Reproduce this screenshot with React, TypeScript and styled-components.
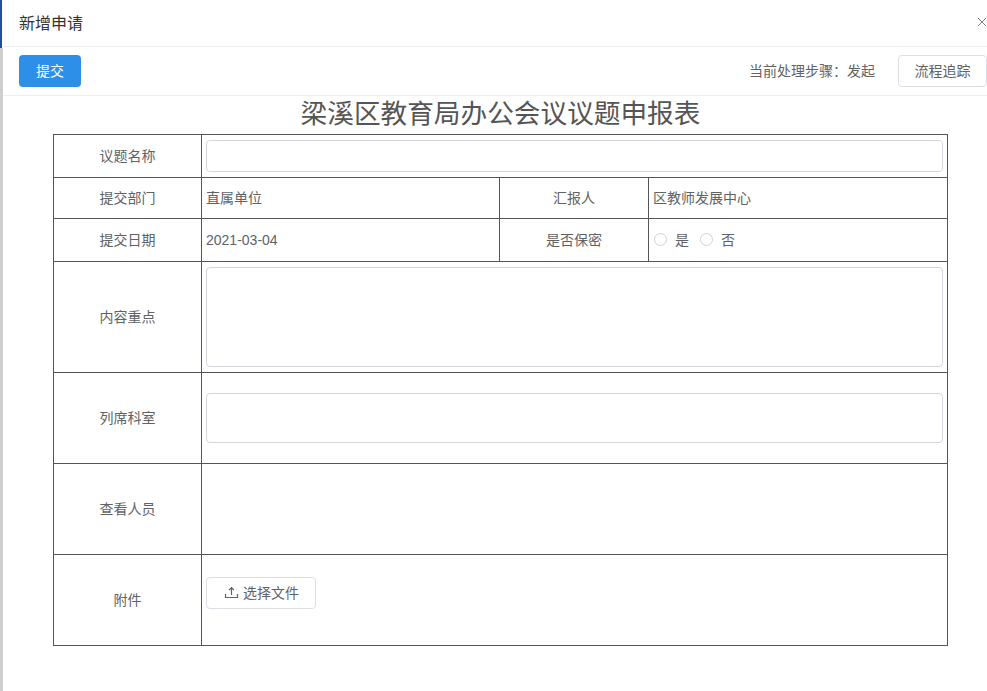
import React from "react";
import styled, { createGlobalStyle } from "styled-components";

const Global = createGlobalStyle`
  html, body { margin: 0; padding: 0; background: #fff; }
  body { font-family: "Liberation Sans", "Noto Sans CJK SC", sans-serif; font-size: 14px; color: #606266; }
  * { box-sizing: border-box; }
`;

const Page = styled.div`
  width: 987px;
  height: 691px;
  display: flex;
  overflow: hidden;
`;
const Strip = styled.div`
  width: 3px;
  flex: none;
  background:
    linear-gradient(#1f4e9c, #1f4e9c) 0 0 / 2px 48px no-repeat,
    linear-gradient(#fff 0 48px, #cfcfcf 48px);
`;
const Dialog = styled.div`
  flex: 1;
  min-width: 0;
  display: flex;
  flex-direction: column;
`;
const Header = styled.header`
  height: 47px;
  flex: none;
  display: flex;
  align-items: center;
  justify-content: space-between;
  padding: 0 0 3px 16px;
  border-bottom: 1px solid #ebeef5;
`;
const Title = styled.span`
  font-size: 16px;
  color: #333;
`;
const Close = styled.span`
  width: 14px;
  margin-right: -2px;
  display: flex;
  color: #808388;
`;
const Toolbar = styled.div`
  height: 49px;
  flex: none;
  display: flex;
  align-items: center;
  justify-content: space-between;
  padding: 0 0 1px 16px;
  border-bottom: 1px solid #ebeef5;
`;
const Primary = styled.button`
  width: 62px;
  height: 32px;
  border: 0;
  border-radius: 4px;
  background: #2d8fe8;
  color: #fff;
  font: inherit;
  font-size: 14px;
  padding: 0 0 2px;
`;
const Right = styled.div`
  display: flex;
  align-items: center;
  gap: 23px;
`;
const Step = styled.span`
  font-size: 14px;
  color: #606266;
  padding-bottom: 2px;
`;
const Plain = styled.button`
  width: 89px;
  height: 32px;
  border: 1px solid #dcdfe6;
  border-radius: 4px;
  background: #fff;
  color: #606266;
  font: inherit;
  font-size: 14px;
  padding: 0 0 2px;
`;
const Body = styled.main`
  padding: 0 39px 0 50px;
`;
const Heading = styled.h1`
  margin: 0;
  height: 38px;
  line-height: 37px;
  text-align: center;
  font-family: "Liberation Serif", "Noto Sans CJK SC", serif;
  font-size: 26.67px;
  font-weight: 400;
  color: #555;
`;
const Table = styled.table`
  width: 895px;
  table-layout: fixed;
  border-collapse: collapse;
  border: 1px solid #555;
  td { border: 1px solid #555; padding: 0; }
`;
const Row = styled.tr<{ $h: number }>`
  height: ${(p) => p.$h}px;
`;
const Label = styled.td`
  text-align: center;
  color: #606266;
  padding-bottom: 2px !important;
`;
const Value = styled.td`
  padding: 0 4px 2px !important;
  color: #606266;
`;
const DateValue = styled.td`
  padding: 0 4px !important;
  color: #606266;
`;
const FieldCell = styled.td`
  padding: 0 4px !important;
`;
const Field = styled.div<{ $h: number }>`
  height: ${(p) => p.$h}px;
  border: 1px solid #d3d6dc;
  border-radius: 4px;
  background: #fff;
`;
const Radios = styled.div`
  display: flex;
  align-items: center;
  padding-left: 1px;
`;
const RadioDot = styled.span`
  width: 13px;
  height: 13px;
  border: 1px solid #cfd2d8;
  border-radius: 50%;
  background: #fff;
`;
const RadioText = styled.span`
  margin: 0 11px 0 8px;
`;
const UploadCell = styled.td`
  vertical-align: top;
  padding: 22px 4px 0 !important;
`;
const Upload = styled.button`
  width: 110px;
  height: 32px;
  display: flex;
  align-items: center;
  justify-content: center;
  gap: 4px;
  border: 1px solid #dcdfe6;
  border-radius: 4px;
  background: #fff;
  color: #606266;
  font: inherit;
  font-size: 14px;
  padding: 0 0 2px 1px;
`;

export default function App() {
  return (
    <Page>
      <Global />
      <Strip />
      <Dialog>
        <Header>
          <Title>新增申请</Title>
          <Close>
            <svg width="14" height="14" viewBox="0 0 14 14" fill="none" stroke="currentColor" strokeWidth="1">
              <path d="M3 3l8 8M11 3l-8 8" />
            </svg>
          </Close>
        </Header>
        <Toolbar>
          <Primary>提交</Primary>
          <Right>
            <Step>当前处理步骤：发起</Step>
            <Plain>流程追踪</Plain>
          </Right>
        </Toolbar>
        <Body>
          <Heading>梁溪区教育局办公会议议题申报表</Heading>
          <Table>
            <colgroup>
              <col width="148" />
              <col width="298" />
              <col width="149" />
              <col width="299" />
            </colgroup>
            <tbody>
              <Row $h={43}>
                <Label>议题名称</Label>
                <FieldCell colSpan={3}><Field $h={32} /></FieldCell>
              </Row>
              <Row $h={41}>
                <Label>提交部门</Label>
                <Value>直属单位</Value>
                <Label>汇报人</Label>
                <Value>区教师发展中心</Value>
              </Row>
              <Row $h={43}>
                <Label>提交日期</Label>
                <DateValue>2021-03-04</DateValue>
                <Label>是否保密</Label>
                <Value>
                  <Radios>
                    <RadioDot /><RadioText>是</RadioText>
                    <RadioDot /><RadioText>否</RadioText>
                  </Radios>
                </Value>
              </Row>
              <Row $h={111}>
                <Label>内容重点</Label>
                <FieldCell colSpan={3}><Field $h={100} /></FieldCell>
              </Row>
              <Row $h={91}>
                <Label>列席科室</Label>
                <FieldCell colSpan={3}><Field $h={50} /></FieldCell>
              </Row>
              <Row $h={91}>
                <Label>查看人员</Label>
                <FieldCell colSpan={3} />
              </Row>
              <Row $h={91}>
                <Label>附件</Label>
                <UploadCell colSpan={3}>
                  <Upload>
                    <svg width="15" height="15" viewBox="0 0 15 15" fill="none" stroke="currentColor" strokeWidth="1.2">
                      <path d="M1.5 9v3.5h12V9M7.5 10V3M5 5.2l2.5-2.5L10 5.2" />
                    </svg>
                    选择文件
                  </Upload>
                </UploadCell>
              </Row>
            </tbody>
          </Table>
        </Body>
      </Dialog>
    </Page>
  );
}
